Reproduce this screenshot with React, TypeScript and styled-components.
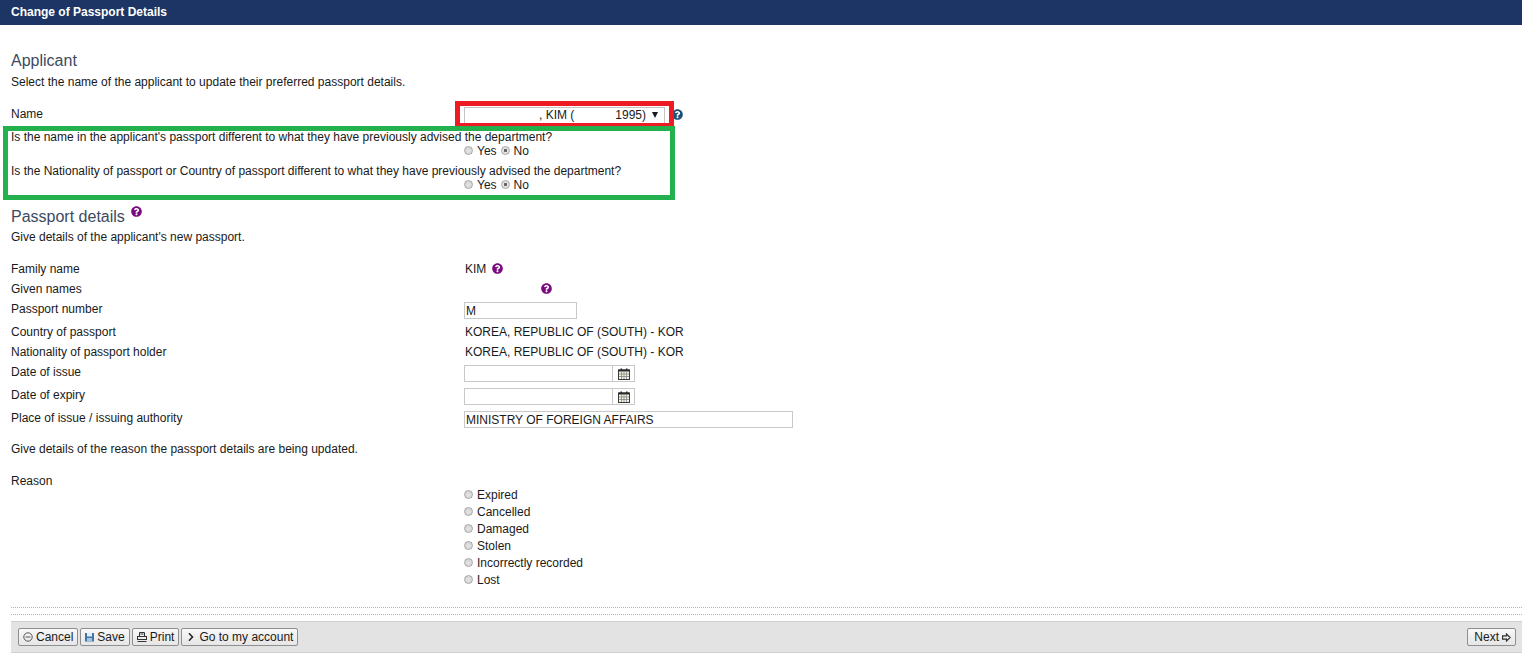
import React from 'react';
import styled, { createGlobalStyle } from 'styled-components';
import { FaQuestionCircle, FaChevronRight } from 'react-icons/fa';

const GlobalStyle = createGlobalStyle`
  html, body {
    margin: 0;
    padding: 0;
    background: #fff;
    font-family: "Liberation Sans", Arial, sans-serif;
    font-size: 12px;
    color: #1a1a1a;
    overflow: hidden;
  }
`;

const Page = styled.div`
  position: relative;
  width: 1522px;
  height: 654px;
`;

const TitleBar = styled.header`
  height: 25px;
  background: #1c3564;
  color: #fff;
  font-size: 12px;
  font-weight: bold;
  line-height: 24px;
  padding-left: 11px;
`;

const Main = styled.main`
  padding: 0 0 0 11px;
  display: flex;
  flex-direction: column;
`;

const SectionTitle = styled.h2<{ $top: number }>`
  margin: ${(p) => p.$top}px 0 0;
  font-size: 16px;
  font-weight: normal;
  line-height: 20px;
  color: #3c4a5e;
  display: flex;
`;

const Text = styled.p<{ $top?: number }>`
  margin: ${(p) => p.$top ?? 0}px 0 0;
  line-height: 16px;
`;

const Row = styled.div<{ $h?: number; $top?: number }>`
  display: grid;
  grid-template-columns: 453px 1fr;
  height: ${(p) => p.$h ?? 20}px;
  margin-top: ${(p) => p.$top ?? 0}px;
  line-height: 20px;
`;

const Value = styled.div`
  display: flex;
  align-items: flex-start;
  padding-left: 1px;
`;

const Field = styled.div`
  display: flex;
  align-items: flex-start;
  padding-top: 3px;
`;

const Question = styled.div<{ $top: number }>`
  line-height: 14px;
  height: 14px;
  margin-top: ${(p) => p.$top}px;
`;

const RadioLine = styled.div<{ $h?: number }>`
  display: flex;
  align-items: center;
  height: ${(p) => p.$h ?? 14}px;
  padding-left: 453px;
`;

const RadioLabel = styled.label`
  display: inline-flex;
  align-items: center;
  margin-right: 4px;
`;

const RadioInput = styled.input`
  appearance: none;
  width: 9px;
  height: 9px;
  margin: 0 4px 1px 0;
  border: 1px solid #a6a6a6;
  border-radius: 50%;
  background: radial-gradient(circle at 50% 60%, #e4e4e4, #cfcfcf);
  &:checked {
    background: radial-gradient(circle, #5e5e5e 0, #6a6a6a 28%, #e2e2e2 40%);
  }
`;

const Radio: React.FC<{ name: string; label: string; checked?: boolean }> = ({ name, label, checked }) => (
  <RadioLabel>
    <RadioInput type="radio" name={name} defaultChecked={checked} />
    {label}
  </RadioLabel>
);

const SelectBox = styled.div`
  box-sizing: border-box;
  width: 201px;
  height: 17px;
  border: 1px solid #c4c4c4;
  display: flex;
  align-items: center;
  line-height: 15px;
  padding-left: 74px;
  position: relative;
  background: #fff;
`;

const SelectCaret = styled.span`
  position: absolute;
  right: 6px;
  top: 4px;
  width: 0;
  height: 0;
  border-left: 3px solid transparent;
  border-right: 3px solid transparent;
  border-top: 6px solid #1a1a1a;
`;

const SelectGap = styled.span`
  display: inline-block;
  width: 41px;
`;

const Help = styled(FaQuestionCircle)<{ $c?: string; $left?: number; $top?: number }>`
  width: 11px;
  height: 11px;
  color: ${(p) => p.$c ?? '#7a0a80'};
  margin-left: ${(p) => p.$left ?? 0}px;
  margin-top: ${(p) => p.$top ?? 0}px;
  flex: none;
`;

const TextInput = styled.input<{ $w: number }>`
  box-sizing: border-box;
  width: ${(p) => p.$w}px;
  height: 17px;
  border: 1px solid #c8c8c8;
  padding: 0 1px;
  font: 12px "Liberation Sans", Arial, sans-serif;
  color: #1a1a1a;
  outline: none;
  border-radius: 0;
  background: #fff;
`;

const DateAddon = styled.span`
  box-sizing: border-box;
  width: 22px;
  height: 17px;
  border: 1px solid #c8c8c8;
  border-left: 0;
  display: flex;
  align-items: center;
  justify-content: center;
  background: #fff;
`;

const CalendarIcon = () => (
  <svg width="12" height="12" viewBox="0 0 12 12">
    <rect x="0.5" y="2" width="11" height="9.5" fill="#f8f2e2" stroke="#3a3a3e" />
    <rect x="0.5" y="1.5" width="11" height="2" fill="#26282c" />
    <rect x="2.5" y="0.5" width="1.5" height="2" fill="#26282c" />
    <rect x="8" y="0.5" width="1.5" height="2" fill="#26282c" />
    <path d="M3.5 4v7M6 4v7M8.5 4v7M1 6h10M1 8.5h10" stroke="#77787e" strokeWidth="0.7" />
  </svg>
);

const Dotted = styled.div<{ $top: number }>`
  height: 0;
  margin-top: ${(p) => p.$top}px;
  border-top: 1px dotted #b4b4b4;
`;

const Footer = styled.footer`
  box-sizing: border-box;
  height: 32px;
  margin: 6px 0 0;
  background: #e3e3e3;
  border-top: 1px solid #cfcfcf;
  border-bottom: 1px solid #cfcfcf;
  padding: 0 6px 0 7px;
  display: flex;
  align-items: center;
  justify-content: space-between;
`;

const ButtonGroup = styled.div`
  display: flex;
  gap: 2px;
`;

const Button = styled.button`
  box-sizing: border-box;
  height: 18px;
  padding: 0 4px;
  display: inline-flex;
  align-items: center;
  gap: 3px;
  font: 12px "Liberation Sans", Arial, sans-serif;
  color: #1a1a1a;
  background: linear-gradient(#f8f8f8, #e6e6e6);
  border: 1px solid #8f8f8f;
  border-radius: 2px;
`;

const NextButton = styled(Button)`
  padding-left: 6px;
`;

const CancelIcon = () => (
  <svg width="10" height="10" viewBox="0 0 10 10" fill="none">
    <circle cx="5" cy="5" r="4.2" stroke="#555" />
    <path d="M2.6 5h4.8" stroke="#555" />
  </svg>
);

const SaveIcon = () => (
  <svg width="9" height="10" viewBox="0 0 9 10">
    <rect x="0" y="1" width="9" height="8.5" fill="#3f78a8" />
    <rect x="2" y="1" width="5" height="3.5" fill="#e6eef5" />
    <rect x="2" y="6" width="5" height="3.5" fill="#a8c4dc" />
  </svg>
);

const PrintIcon = () => (
  <svg width="10" height="10" viewBox="0 0 10 10" fill="none" stroke="#333">
    <path d="M2.5 4V0.5h5V4" />
    <rect x="0.5" y="4.5" width="9" height="3" />
    <path d="M3.5 2h3M0.5 9.5h9" />
  </svg>
);

const Chevron = styled(FaChevronRight)`
  width: 6px;
  height: 10px;
  color: #222;
  margin: 0 2px;
`;

const NextIcon = () => (
  <svg width="9" height="9" viewBox="0 0 9 9" fill="none" stroke="#333" strokeWidth="1.2">
    <path d="M0.6 2.9h3.9V1L8.2 4.5 4.5 8V6.1H0.6z" />
  </svg>
);

/* the red and green markup someone drew over the screenshot */
const Highlight = styled.div<{ $c: string; $x: number; $y: number; $w: number; $h: number }>`
  position: absolute;
  box-sizing: border-box;
  left: ${(p) => p.$x}px;
  top: ${(p) => p.$y}px;
  width: ${(p) => p.$w}px;
  height: ${(p) => p.$h}px;
  border: 5px solid ${(p) => p.$c};
  pointer-events: none;
`;

const reasons = ['Expired', 'Cancelled', 'Damaged', 'Stolen', 'Incorrectly recorded', 'Lost'];

const App: React.FC = () => (
  <Page>
    <GlobalStyle />
    <TitleBar>Change of Passport Details</TitleBar>
    <Main>
      <SectionTitle $top={26}>Applicant</SectionTitle>
      <Text $top={3}>Select the name of the applicant to update their preferred passport details.</Text>
      <Row $h={23} $top={14}>
        <div>Name</div>
        <Field>
          <SelectBox>
            , KIM (<SelectGap />1995)
            <SelectCaret />
          </SelectBox>
          <Help $c="#1b4f78" $left={7} $top={2} />
        </Field>
      </Row>
      <Question $top={3}>Is the name in the applicant's passport different to what they have previously advised the department?</Question>
      <RadioLine>
        <Radio name="q1" label="Yes" />
        <Radio name="q1" label="No" checked />
      </RadioLine>
      <Question $top={6}>Is the Nationality of passport or Country of passport different to what they have previously advised the department?</Question>
      <RadioLine>
        <Radio name="q2" label="Yes" />
        <Radio name="q2" label="No" checked />
      </RadioLine>
      <SectionTitle $top={15}>
        Passport details
        <Help $left={6} $top={-1} />
      </SectionTitle>
      <Text $top={2}>Give details of the applicant's new passport.</Text>
      <Row $top={14}>
        <div>Family name</div>
        <Value>
          KIM
          <Help $left={6} $top={4} />
        </Value>
      </Row>
      <Row>
        <div>Given names</div>
        <Value>
          <Help $left={76} $top={4} />
        </Value>
      </Row>
      <Row $h={23}>
        <div>Passport number</div>
        <Field>
          <TextInput $w={113} defaultValue="M" />
        </Field>
      </Row>
      <Row>
        <div>Country of passport</div>
        <Value>KOREA, REPUBLIC OF (SOUTH) - KOR</Value>
      </Row>
      <Row>
        <div>Nationality of passport holder</div>
        <Value>KOREA, REPUBLIC OF (SOUTH) - KOR</Value>
      </Row>
      <Row $h={23}>
        <div>Date of issue</div>
        <Field>
          <TextInput $w={149} />
          <DateAddon>
            <CalendarIcon />
          </DateAddon>
        </Field>
      </Row>
      <Row $h={23}>
        <div>Date of expiry</div>
        <Field>
          <TextInput $w={149} />
          <DateAddon>
            <CalendarIcon />
          </DateAddon>
        </Field>
      </Row>
      <Row $h={23}>
        <div>Place of issue / issuing authority</div>
        <Field>
          <TextInput $w={329} defaultValue="MINISTRY OF FOREIGN AFFAIRS" />
        </Field>
      </Row>
      <Text $top={10}>Give details of the reason the passport details are being updated.</Text>
      <Row $h={15} $top={14}>
        <div>Reason</div>
      </Row>
      {reasons.map((r) => (
        <RadioLine key={r} $h={17}>
          <Radio name="reason" label={r} />
        </RadioLine>
      ))}
      <Dotted $top={19} />
      <Dotted $top={6} />
      <Footer>
        <ButtonGroup>
          <Button>
            <CancelIcon />
            Cancel
          </Button>
          <Button>
            <SaveIcon />
            Save
          </Button>
          <Button>
            <PrintIcon />
            Print
          </Button>
          <Button>
            <Chevron />
            Go to my account
          </Button>
        </ButtonGroup>
        <NextButton>
          Next
          <NextIcon />
        </NextButton>
      </Footer>
    </Main>
    <Highlight $c="#ed1c24" $x={455} $y={101} $w={219} $h={27} />
    <Highlight $c="#22b14c" $x={3} $y={126} $w={672} $h={74} />
  </Page>
);

export default App;
